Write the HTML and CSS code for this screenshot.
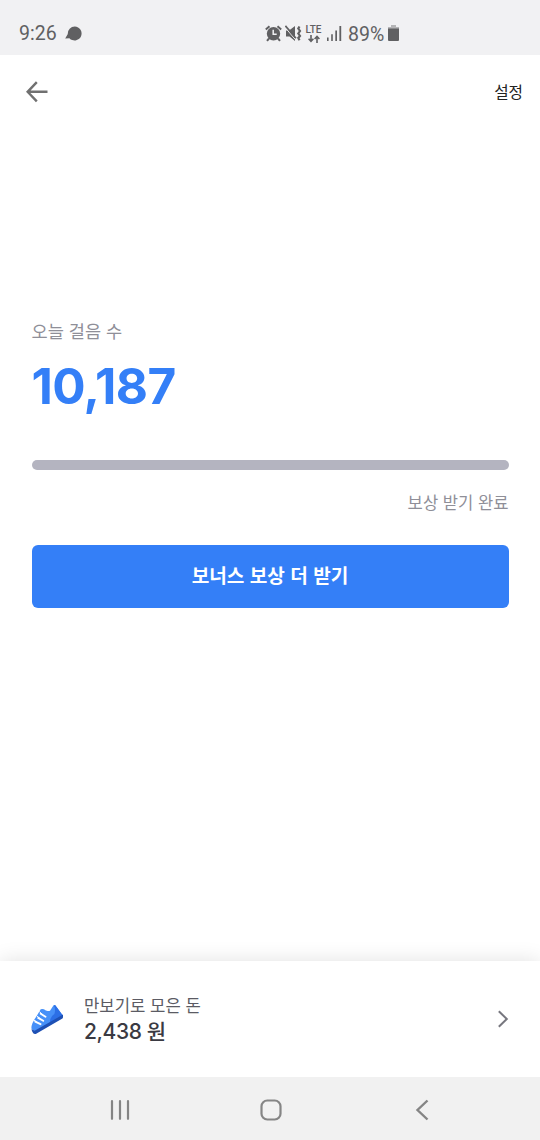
FILE: index.html
```html
<!DOCTYPE html>
<html lang="ko">

<head>
    <meta charset="UTF-8">
    <meta name="viewport" content="width=device-width, initial-scale=1.0">
    <title>만보기</title>
    <link rel="stylesheet" href="styles.css">
</head>

<body>
    <!-- Status Bar -->
    <div class="status-bar">
        <span class="status-time">9:26</span>
        <svg class="status-chat" width="18" height="16" viewBox="0 0 18 16">
            <path d="M9.8.5a7 7 0 1 1-5.4 11.7L.2 12.6 2.8 8A7 7 0 0 1 9.8.5z" fill="#606062"/>
        </svg>
        <div class="status-icons">
            <!-- alarm -->
            <svg width="17" height="17" viewBox="0 0 17 17" fill="none" stroke="#606062">
                <circle cx="8.5" cy="8.7" r="6.7" fill="#606062" stroke="none"/>
                <path d="M.8 4.5 4.5 1.3M12.5 1.3 16.2 4.5M4 13.5l-2 2.3M13 13.5l2 2.3" stroke-width="2"/>
                <path d="M8.2 4.8v4.5h3.5" stroke="#f1f1f3" stroke-width="1.5"/>
            </svg>
            <!-- vibrate / mute -->
            <svg width="17" height="17" viewBox="0 0 17 17">
                <path d="M1 5.5h3l6-4.5v15l-5.5-4.5H1z" fill="#606062"/>
                <path d="M0 2.4 10.4 14.6" stroke="#f1f1f3" stroke-width="1"/>
                <path d="M.4.8 11 13.2" stroke="#606062" stroke-width="1.7"/>
                <path d="M14.5 1.5l-1.2 2L15 6l-1.7 2.5L15 11l-1.7 2 1.2 2.2" fill="none" stroke="#606062" stroke-width="2.2"/>
            </svg>
            <div class="lte">
                <span>LTE</span>
                <svg width="12" height="8" viewBox="0 0 12 8" fill="none" stroke="#606062" stroke-width="1.6">
                    <path d="M3 0v6M.6 3.8 3 6.3l2.4-2.5M9 8V1.6M6.6 4 9 1.4 11.4 4"/>
                </svg>
            </div>
            <svg class="signal" width="15" height="15" viewBox="0 0 15 15" fill="#606062">
                <path d="M0 11.5h1.6V15H0zM4.2 8.2h1.6V15H4.2zM8.3 4.5h1.7V15H8.3zM12.4 0h1.8v15h-1.8z"/>
            </svg>
            <span class="battery-text">89%</span>
            <svg class="battery" width="11" height="17" viewBox="0 0 11 17">
                <path d="M3 0h5v2h3v3H0V2h3z" fill="#b5b5b7"/>
                <path d="M0 3.5h11V15a1 1 0 0 1-1 1H1a1 1 0 0 1-1-1z" fill="#606062"/>
            </svg>
        </div>
    </div>

    <!-- Header -->
    <header class="header">
        <svg width="22" height="22" viewBox="0 0 22 22" fill="none" stroke="#707070" stroke-width="2.4">
            <path d="M21.5 10.8H2M10.8 1.2 1.6 10.8 10.8 20.4"/>
        </svg>
        <span class="settings">설정</span>
    </header>

    <!-- Step Count -->
    <main class="steps">
        <p class="steps-label">오늘 걸음 수</p>
        <h1 class="steps-count">10,187</h1>
        <div class="progress"></div>
        <p class="reward-status">보상 받기 완료</p>
        <button class="bonus-btn">보너스 보상 더 받기</button>
    </main>

    <!-- Saved Money -->
    <section class="money">
        <svg class="shoe" width="34" height="32" viewBox="0 0 34 32">
            <path d="M5.7 13 9.7 6.3q1.6-.8 3.3 0 1.4 1.4 2.7 1.4 2 .5 3.3 0l3.4-5.2q1-1 1.9-.2L32 12.7 4 29 .4 25.5Q.2 20.5 5.7 13z" fill="#4690f8"/>
            <path d="M24.3 2.3 32 12.7l-13 7.6q-.6-5.8 4.4-9.3 1.6-4.6-.7-8.7z" fill="#2c6fe6"/>
            <path d="M.5 26 3.6 27.8 32 11.6v2.6q-.1 1-1 1.6L5.2 30.7q-1.6.8-3-.5Q.8 28.8.5 26z" fill="#1e50b4"/>
            <path d="M4.3 18.6l5.2 2.6M7.2 14.9l5 2.9M9.7 10.7l4.8 3" stroke="#fff" stroke-width="1.9" stroke-linecap="round"/>
            <path d="M2.8 17l3 2M5.7 12.8l3.3 2.6M8.3 8.6l3 2.6" stroke="#fff" stroke-width="1"/>
        </svg>
        <div class="money-info">
            <p class="money-label">만보기로 모은 돈</p>
            <p class="money-amount">2,438 원</p>
        </div>
        <svg width="12" height="18" viewBox="0 0 12 18" fill="none" stroke="#77777f" stroke-width="2">
            <path d="M1.8 1.2 9.8 9l-8 7.8"/>
        </svg>
    </section>

    <!-- Navigation Bar -->
    <nav class="nav-bar">
        <svg width="22" height="22" viewBox="0 0 22 22" stroke="#858585" stroke-width="2.2" stroke-linecap="round">
            <path d="M3 2.2v17.6M11 2.2v17.6M19 2.2v17.6"/>
        </svg>
        <svg width="22" height="22" viewBox="0 0 22 22" fill="none" stroke="#858585" stroke-width="2.2">
            <rect x="1.5" y="1.5" width="19" height="19" rx="5.8"/>
        </svg>
        <svg width="22" height="22" viewBox="0 0 22 22" fill="none" stroke="#858585" stroke-width="2.4">
            <path d="M16.5 1.5 6.5 11l10 9.5"/>
        </svg>
    </nav>
</body>

</html>
```
FILE: styles.css
```css
/* General Styling */
* {
    box-sizing: border-box;
}

body {
    margin: 0;
    height: 1140px;
    display: flex;
    flex-direction: column;
    font-family: 'Noto Sans CJK KR', sans-serif;
    background-color: #fff;
    overflow: hidden;
}

p,
h1 {
    margin: 0;
}

svg {
    display: block;
    flex-shrink: 0;
}

/* Status Bar */
.status-bar {
    height: 55px;
    padding: 12px 0 0 19px;
    display: flex;
    align-items: center;
    background-color: #f1f1f3;
    color: #606062;
    font-family: Roboto, sans-serif;
    font-size: 19.5px;
}

.status-time {
    width: 46px;
}

.status-icons {
    display: flex;
    align-items: center;
    margin-left: 182px;
}

.status-icons > svg + svg {
    margin-left: 3px;
}

.lte {
    width: 17px;
    height: 18px;
    margin-left: 3px;
    display: flex;
    flex-direction: column;
    align-items: center;
    font-size: 10px;
    font-weight: 500;
    line-height: 9px;
}

.lte svg {
    margin-top: 1px;
}

.signal {
    margin-left: 5px;
}

.battery-text {
    margin-left: 6px;
    width: 40px;
    padding-top: 1px;
    font-size: 19.5px;
}

/* Header */
.header {
    height: 73px;
    padding: 0 17px 0 26px;
    display: flex;
    align-items: center;
    justify-content: space-between;
}

.settings {
    font-size: 15.7px;
    color: #222;
}

/* Step Count */
.steps {
    flex: 1;
    padding: 190px 31.5px 0;
    display: flex;
    flex-direction: column;
}

.steps-label {
    font-size: 17.6px;
    line-height: 26px;
    color: #8f8f98;
}

.steps-count {
    margin-top: 12px;
    font-family: Inter, sans-serif;
    font-size: 49.5px;
    font-weight: 700;
    line-height: 60px;
    letter-spacing: -0.6px;
    color: #347ff7;
}

.progress {
    height: 10.5px;
    margin-top: 43.5px;
    border-radius: 6px;
    background-color: #b4b4c0;
}

.reward-status {
    margin-top: 19px;
    font-size: 16.6px;
    line-height: 26px;
    text-align: right;
    color: #8f8f98;
}

.bonus-btn {
    height: 63px;
    margin-top: 29.5px;
    padding: 0 0 2px;
    border: none;
    border-radius: 6px;
    background-color: #347ff7;
    color: #fff;
    font-family: inherit;
    font-size: 19.1px;
    font-weight: 700;
}

/* Saved Money */
.money {
    height: 116px;
    padding: 0 31px;
    display: flex;
    align-items: center;
    background-color: #fff;
    box-shadow: 0 0 20px rgba(0, 0, 0, 0.12);
}

.money-info {
    flex: 1;
    margin-left: 19px;
}

.money-label {
    font-size: 16.7px;
    line-height: 26px;
    color: #5b5b64;
}

.money-amount {
    font-family: Inter, 'Noto Sans CJK KR', sans-serif;
    font-size: 21px;
    font-weight: 500;
    line-height: 28px;
    letter-spacing: -0.4px;
    color: #3a3a42;
}

/* Navigation Bar */
.nav-bar {
    height: 63px;
    padding: 3px 107px 0 109px;
    display: flex;
    align-items: center;
    justify-content: space-between;
    background-color: #f1f1f1;
    position: relative; /* Keeps the card shadow behind the bar */
}
```
